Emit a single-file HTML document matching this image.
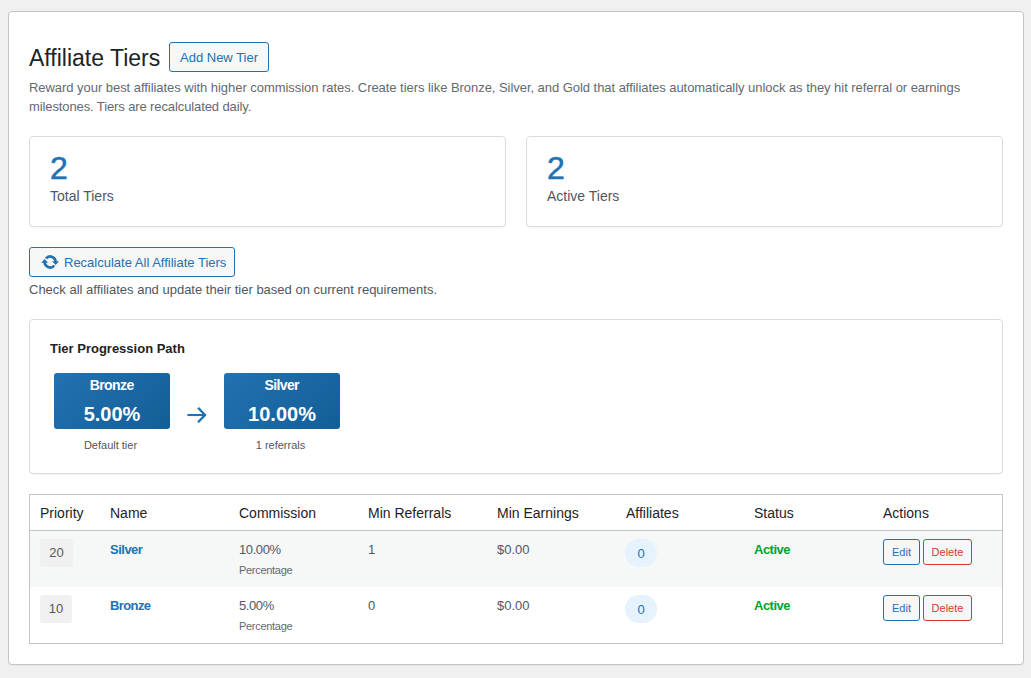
<!DOCTYPE html>
<html>
<head>
<meta charset="utf-8">
<style>
*{box-sizing:border-box;margin:0;padding:0}
html,body{width:1031px;height:678px;overflow:hidden;background:#f0f0f1;font-family:"Liberation Sans",sans-serif;color:#1d2327}
.abs{position:absolute}
.t{position:absolute;white-space:nowrap;line-height:1}
.wrap{position:absolute;left:8px;top:11px;width:1016px;height:654px;background:#fff;border:1px solid #c3c4c7;border-radius:4px;box-shadow:0 1px 1px rgba(0,0,0,.04)}
.card{position:absolute;background:#fff;border:1px solid #dcdcde;border-radius:4px;box-shadow:0 1px 1px rgba(0,0,0,.04)}
.btn{position:absolute;border:1px solid #2271b1;border-radius:3px;background:#f6f7f7;color:#2271b1}
.tier{position:absolute;top:373px;width:116px;height:56px;border-radius:3px;background:linear-gradient(135deg,#2271b1 0%,#135e96 100%);color:#fff}
table{position:absolute;left:29px;top:494px;width:974px;border-collapse:collapse;border:1px solid #c3c4c7;table-layout:fixed}
th,td{text-align:left;vertical-align:top;padding:0 0 0 10px}
</style>
</head>
<body>
<div class="wrap"></div>

<!-- heading -->
<div class="t" style="left:29px;top:47px;font-size:23px;color:#1d2327">Affiliate Tiers</div>
<div class="btn" style="left:169px;top:42px;width:100px;height:30px"></div>
<div class="t" style="left:180px;top:51px;font-size:13px;color:#2271b1">Add New Tier</div>

<div class="t" style="left:29px;top:81px;letter-spacing:-0.045px;font-size:13px;color:#646970">Reward your best affiliates with higher commission rates. Create tiers like Bronze, Silver, and Gold that affiliates automatically unlock as they hit referral or earnings</div>
<div class="t" style="left:29px;top:100px;letter-spacing:-0.11px;font-size:13px;color:#646970">milestones. Tiers are recalculated daily.</div>

<!-- stat cards -->
<div class="card" style="left:29px;top:136px;width:477px;height:91px"></div>
<div class="t" style="left:50px;top:152px;font-size:32px;color:#2271b1;-webkit-text-stroke:0.5px #2271b1">2</div>
<div class="t" style="left:50px;top:189px;font-size:14px;color:#50575e">Total Tiers</div>
<div class="card" style="left:526px;top:136px;width:477px;height:91px"></div>
<div class="t" style="left:547px;top:152px;font-size:32px;color:#2271b1;-webkit-text-stroke:0.5px #2271b1">2</div>
<div class="t" style="left:547px;top:189px;font-size:14px;color:#50575e">Active Tiers</div>

<!-- recalc -->
<div class="btn" style="left:29px;top:247px;width:206px;height:30px"></div>
<svg class="abs" style="left:40px;top:254px" width="20" height="16" viewBox="0 0 20 16"><g fill="none" stroke="#2271b1" stroke-width="2.6"><path d="M5.96 4.53A5.4 5.4 0 0 1 15.5 8.6"/><path d="M14.24 11.47A5.4 5.4 0 0 1 4.7 7.4"/></g><path fill="#2271b1" d="M12.2 7.3H19L15.6 11.1zM1.2 8.7H8.1L4.6 4.9z"/></svg>
<div class="t" style="left:64px;top:256px;font-size:13px;color:#2271b1">Recalculate All Affiliate Tiers</div>
<div class="t" style="left:29px;top:283px;font-size:13px;color:#50575e">Check all affiliates and update their tier based on current requirements.</div>

<!-- progression -->
<div class="card" style="left:29px;top:319px;width:974px;height:155px"></div>
<div class="t" style="left:50px;top:342px;font-size:13px;font-weight:700;color:#1d2327">Tier Progression Path</div>

<div class="tier" style="left:54px"></div>
<div class="t" style="left:54px;width:116px;text-align:center;top:378px;font-size:14px;letter-spacing:-0.6px;text-indent:-0.6px;font-weight:700;color:#fff">Bronze</div>
<div class="t" style="left:54px;width:116px;text-align:center;top:404px;font-size:20px;font-weight:700;color:#fff">5.00%</div>
<div class="t" style="left:52.5px;width:116px;text-align:center;top:440px;font-size:11px;color:#50575e">Default tier</div>

<svg class="abs" style="left:182px;top:402px" width="30" height="26" viewBox="0 0 30 26"><path d="M5.4 13H22.5" stroke="#2271b1" stroke-width="2.1" fill="none"/><path d="M16.1 5.7L23 13 16.1 20.3" stroke="#2271b1" stroke-width="2.4" fill="none" stroke-linejoin="miter"/></svg>

<div class="tier" style="left:224px"></div>
<div class="t" style="left:224px;width:116px;text-align:center;top:378px;font-size:14px;letter-spacing:-0.6px;text-indent:-0.6px;font-weight:700;color:#fff">Silver</div>
<div class="t" style="left:224px;width:116px;text-align:center;top:404px;font-size:20px;font-weight:700;color:#fff">10.00%</div>
<div class="t" style="left:222.5px;width:116px;text-align:center;top:440px;font-size:11px;color:#50575e">1 referrals</div>

<!-- table -->
<div class="abs" style="left:29px;top:494px;width:974px;height:150px;border:1px solid #c3c4c7"></div>
<div class="abs" style="left:30px;top:530px;width:972px;height:1px;background:#c3c4c7"></div>
<div class="abs" style="left:30px;top:531px;width:972px;height:56px;background:#f6f7f7"></div>

<div class="t" style="left:40px;top:506px;font-size:14px;color:#1d2327">Priority</div>
<div class="t" style="left:110px;top:506px;font-size:14px;color:#1d2327">Name</div>
<div class="t" style="left:239px;top:506px;font-size:14px;color:#1d2327">Commission</div>
<div class="t" style="left:368px;top:506px;font-size:14px;color:#1d2327">Min Referrals</div>
<div class="t" style="left:497px;top:506px;font-size:14px;color:#1d2327">Min Earnings</div>
<div class="t" style="left:626px;top:506px;font-size:14px;color:#1d2327">Affiliates</div>
<div class="t" style="left:754px;top:506px;font-size:14px;color:#1d2327">Status</div>
<div class="t" style="left:883px;top:506px;font-size:14px;color:#1d2327">Actions</div>

<!-- row 1 -->
<div class="abs" style="left:40px;top:539px;width:33px;height:28px;background:#f0f0f1;border-radius:3px"></div>
<div class="t" style="left:40px;width:33px;text-align:center;top:546px;font-size:13px;color:#50575e">20</div>
<div class="t" style="left:110px;top:543px;letter-spacing:-0.5px;font-size:13px;font-weight:700;color:#2271b1">Silver</div>
<div class="t" style="left:239px;top:543px;letter-spacing:-0.4px;font-size:13px;color:#50575e">10.00%</div>
<div class="t" style="left:239px;top:565px;letter-spacing:-0.3px;font-size:11px;color:#646970">Percentage</div>
<div class="t" style="left:368px;top:543px;font-size:13px;color:#50575e">1</div>
<div class="t" style="left:497px;top:543px;font-size:13px;color:#50575e">$0.00</div>
<div class="abs" style="left:625px;top:539px;width:32px;height:28px;background:#e6f2fe;border-radius:14px"></div>
<div class="t" style="left:625px;width:32px;text-align:center;top:547px;font-size:13px;color:#2271b1">0</div>
<div class="t" style="left:754px;top:543px;letter-spacing:-0.5px;font-size:13px;font-weight:700;color:#00a32a">Active</div>
<div class="abs" style="left:883px;top:539px;width:37px;height:26px;border:1px solid #2271b1;border-radius:3px;background:#f6f7f7"></div>
<div class="t" style="left:883px;width:37px;text-align:center;top:547px;font-size:11px;color:#2271b1">Edit</div>
<div class="abs" style="left:923px;top:539px;width:49px;height:26px;border:1px solid #d63638;border-radius:3px;background:#f6f7f7"></div>
<div class="t" style="left:923px;width:49px;text-align:center;top:547px;font-size:11px;color:#d63638">Delete</div>

<!-- row 2 -->
<div class="abs" style="left:40px;top:595px;width:32px;height:28px;background:#f0f0f1;border-radius:3px"></div>
<div class="t" style="left:40px;width:32px;text-align:center;top:602px;font-size:13px;color:#50575e">10</div>
<div class="t" style="left:110px;top:599px;letter-spacing:-0.6px;font-size:13px;font-weight:700;color:#2271b1">Bronze</div>
<div class="t" style="left:239px;top:599px;letter-spacing:-0.4px;font-size:13px;color:#50575e">5.00%</div>
<div class="t" style="left:239px;top:621px;letter-spacing:-0.3px;font-size:11px;color:#646970">Percentage</div>
<div class="t" style="left:368px;top:599px;font-size:13px;color:#50575e">0</div>
<div class="t" style="left:497px;top:599px;font-size:13px;color:#50575e">$0.00</div>
<div class="abs" style="left:625px;top:595px;width:32px;height:28px;background:#e6f2fe;border-radius:14px"></div>
<div class="t" style="left:625px;width:32px;text-align:center;top:603px;font-size:13px;color:#2271b1">0</div>
<div class="t" style="left:754px;top:599px;letter-spacing:-0.5px;font-size:13px;font-weight:700;color:#00a32a">Active</div>
<div class="abs" style="left:883px;top:595px;width:37px;height:26px;border:1px solid #2271b1;border-radius:3px;background:#f6f7f7"></div>
<div class="t" style="left:883px;width:37px;text-align:center;top:603px;font-size:11px;color:#2271b1">Edit</div>
<div class="abs" style="left:923px;top:595px;width:49px;height:26px;border:1px solid #d63638;border-radius:3px;background:#f6f7f7"></div>
<div class="t" style="left:923px;width:49px;text-align:center;top:603px;font-size:11px;color:#d63638">Delete</div>

</body>
</html>
